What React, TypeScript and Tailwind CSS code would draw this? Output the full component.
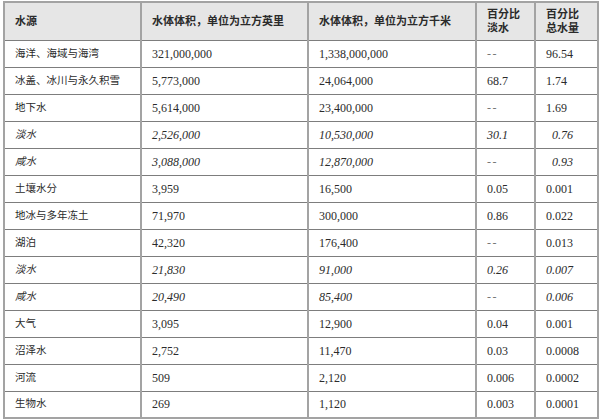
const rows: [string, string, string, string, string, boolean, boolean][] = [
  ["海洋、海域与海湾", "321,000,000", "1,338,000,000", "--", "96.54", false, false],
  ["冰盖、冰川与永久积雪", "5,773,000", "24,064,000", "68.7", "1.74", false, false],
  ["地下水", "5,614,000", "23,400,000", "--", "1.69", false, false],
  ["淡水", "2,526,000", "10,530,000", "30.1", "0.76", true, true],
  ["咸水", "3,088,000", "12,870,000", "--", "0.93", true, true],
  ["土壤水分", "3,959", "16,500", "0.05", "0.001", false, false],
  ["地冰与多年冻土", "71,970", "300,000", "0.86", "0.022", false, false],
  ["湖泊", "42,320", "176,400", "--", "0.013", false, false],
  ["淡水", "21,830", "91,000", "0.26", "0.007", true, false],
  ["咸水", "20,490", "85,400", "--", "0.006", true, false],
  ["大气", "3,095", "12,900", "0.04", "0.001", false, false],
  ["沼泽水", "2,752", "11,470", "0.03", "0.0008", false, false],
  ["河流", "509", "2,120", "0.006", "0.0002", false, false],
  ["生物水", "269", "1,120", "0.003", "0.0001", false, false],
]

const cell = "border-x-2 border-x-[#a3a3a3] pl-[10px] align-middle"

export default function App() {
  return (
    <div className="min-h-screen bg-white pl-[3px] pt-px text-[#2b2b2b]" style={{ fontFamily: '"Liberation Serif", "Noto Sans CJK SC", serif' }}>
      <table className="w-[594px] table-fixed border-collapse border-2 border-[#a3a3a3]">
        <colgroup>
          <col className="w-[137px]" />
          <col className="w-[167px]" />
          <col className="w-[168px]" />
          <col className="w-[59px]" />
          <col className="w-[63px]" />
        </colgroup>
        <thead>
          <tr className="h-[38px] border-b border-b-[#7d7d7d] bg-[#e6e6e6] text-[11px] font-bold leading-[14px]">
            <th className={cell + " text-left"}>水源</th>
            <th className={cell + " text-left"}>水体体积，单位为立方英里</th>
            <th className={cell + " text-left"}>水体体积，单位为立方千米</th>
            <th className={cell + " text-left"}>百分比<br />淡水</th>
            <th className={cell + " text-left"}>百分比<br />总水量</th>
          </tr>
        </thead>
        <tbody>
          {rows.map((r, i) => (
            <tr key={i} className={"h-[27px] border-b border-b-[#7d7d7d] " + (r[5] ? "italic" : "")}>
              <td className={cell + " text-[10.5px]"}>{r[0]}</td>
              <td className={cell + " text-[12px]"}>{r[1]}</td>
              <td className={cell + " text-[12px]"}>{r[2]}</td>
              <td className={cell + " text-[12px]"}>
                {r[3] === "--" ? <span className="not-italic tracking-[1.5px] text-[#777]">--</span> : r[3]}
              </td>
              <td className={cell + " text-[12px] " + (r[6] ? "pl-[16px]" : "")}>{r[4]}</td>
            </tr>
          ))}
        </tbody>
      </table>
    </div>
  )
}
